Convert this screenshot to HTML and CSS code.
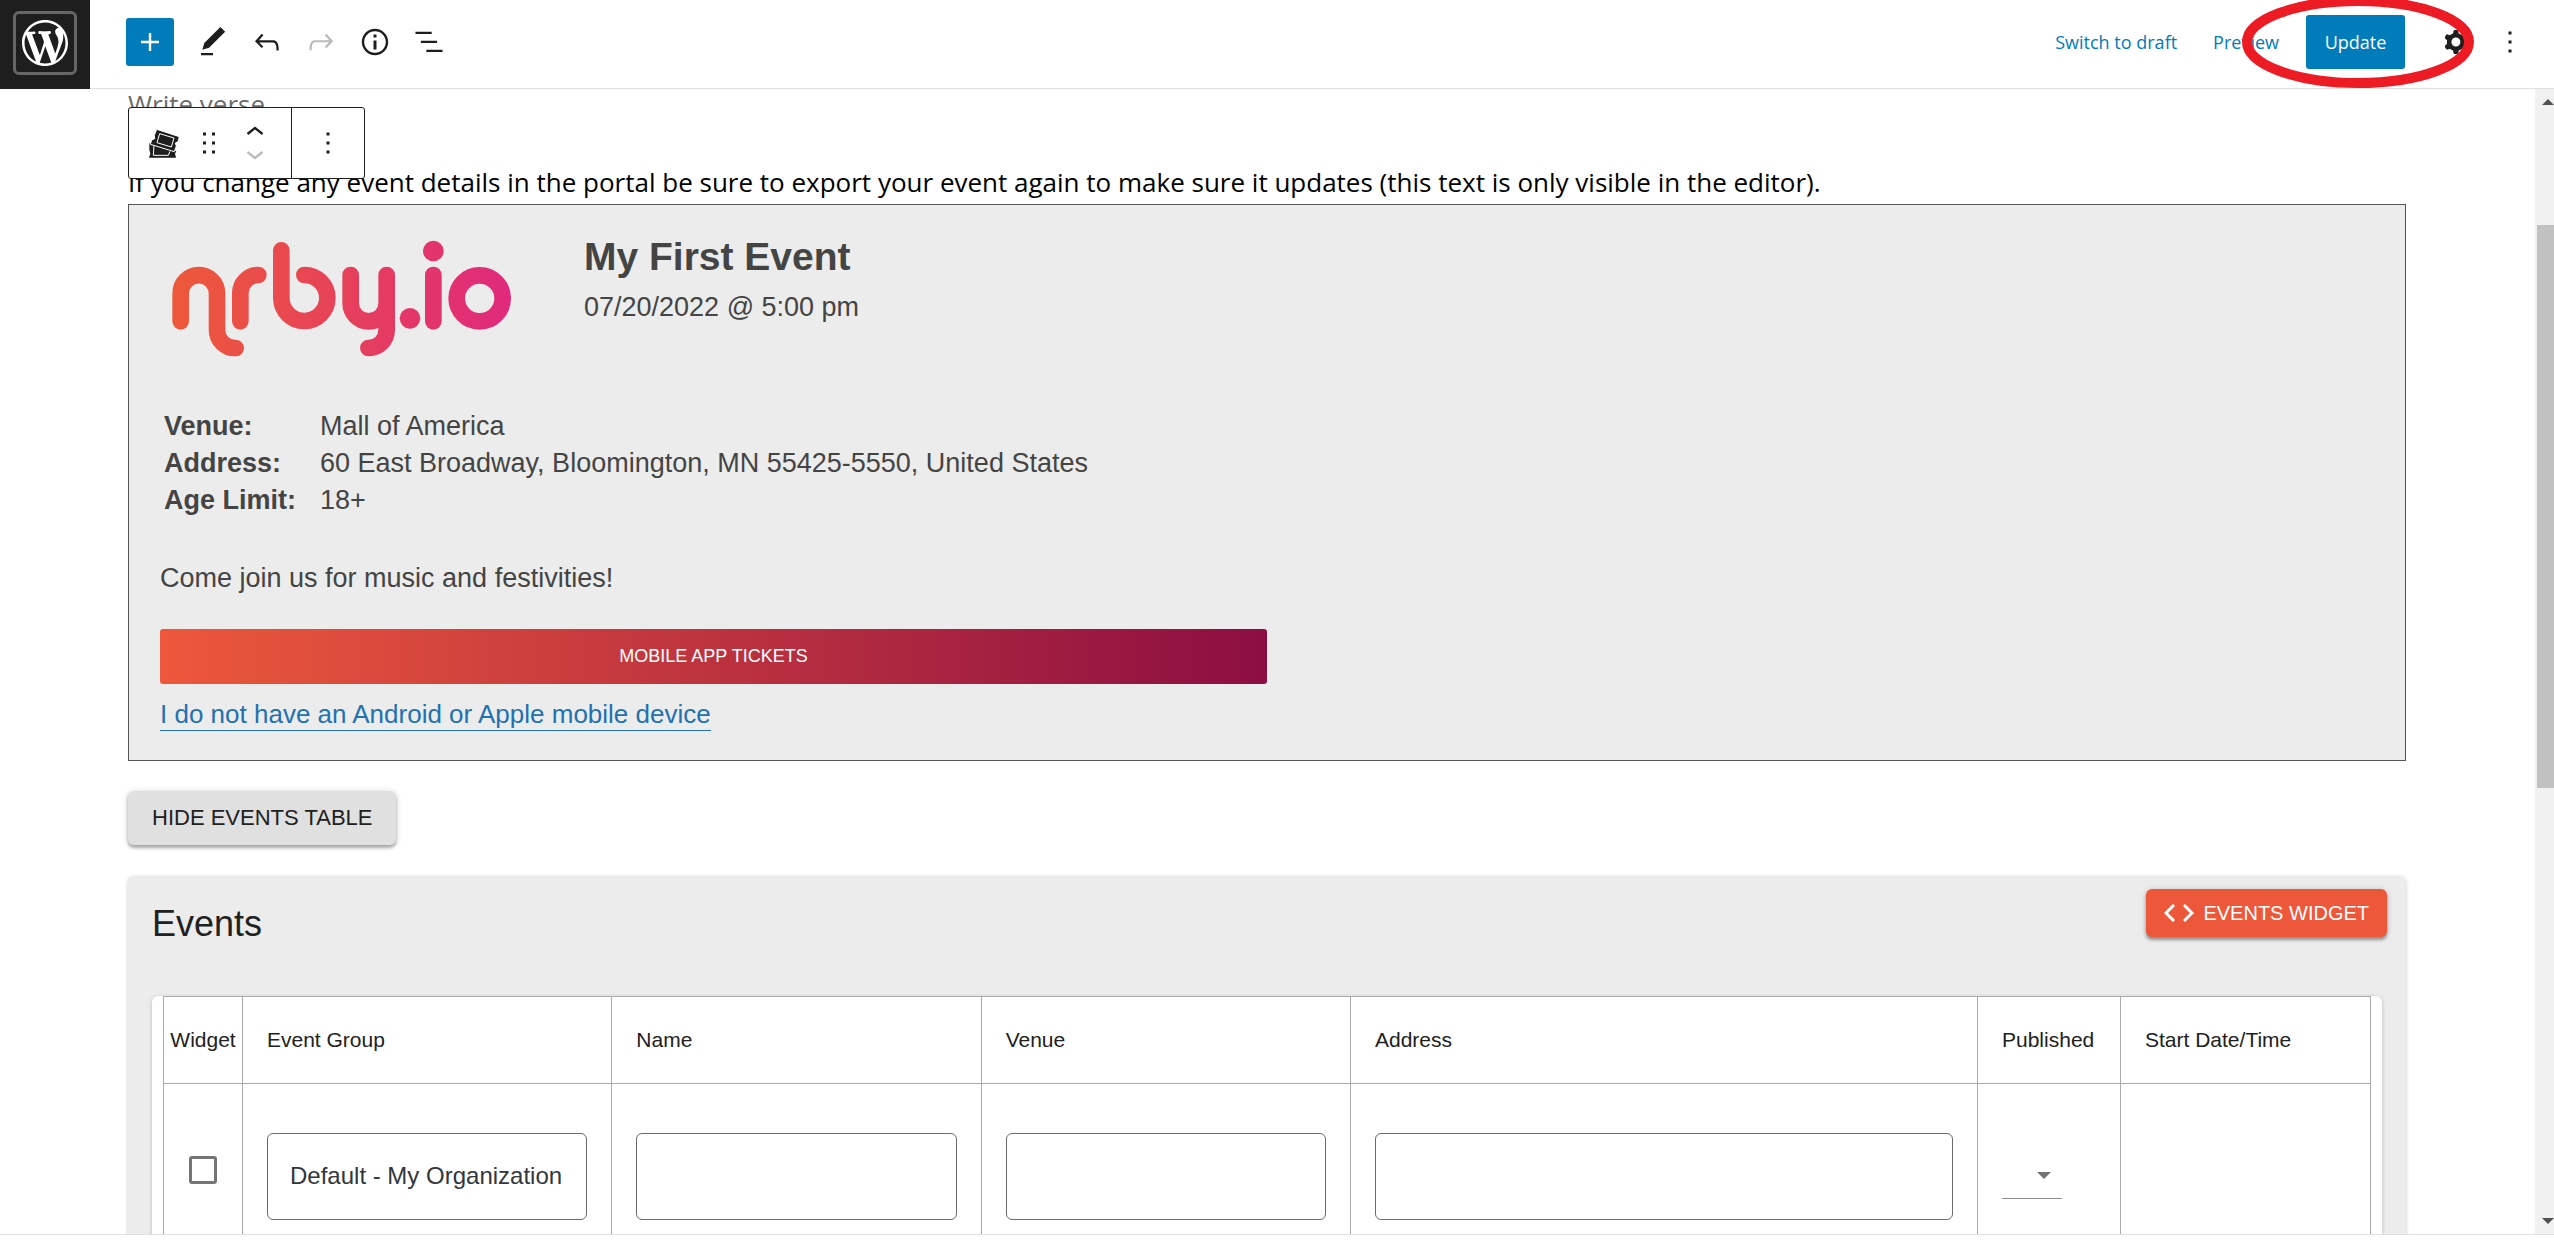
FILE: index.html
```html
<!DOCTYPE html>
<html lang="en">
<head>
<meta charset="utf-8">
<title>Edit Page</title>
<link rel="stylesheet" href="styles.css">
</head>
<body>
<header class="topbar">
  <a class="site-logo" href="#" aria-label="View pages">
    <svg viewBox="0 0 20 20"><path d="M20 10c0-5.51-4.49-10-10-10C4.48 0 0 4.49 0 10c0 5.52 4.48 10 10 10 5.51 0 10-4.48 10-10zM7.78 15.37L4.37 6.22c.55-.02 1.17-.08 1.17-.08.5-.06.44-1.13-.06-1.11 0 0-1.45.11-2.37.11-.18 0-.37 0-.58-.01C4.12 2.69 6.87 1.11 10 1.11c2.33 0 4.45.87 6.05 2.34-.68-.11-1.65.39-1.65 1.58 0 .74.45 1.36.9 2.1.35.61.55 1.36.55 2.46 0 1.49-1.4 5-1.4 5l-3.03-8.37c.54-.02.82-.17.82-.17.5-.05.44-1.25-.06-1.22 0 0-1.44.12-2.38.12-.87 0-2.33-.12-2.33-.12-.5-.03-.56 1.2-.06 1.22l.92.08 1.26 3.41zM17.41 10c.24-.64.74-1.87.43-4.25.7 1.29 1.05 2.71 1.05 4.25 0 3.29-1.73 6.24-4.4 7.78.97-2.59 1.94-5.2 2.92-7.78zM6.1 18.09C3.12 16.65 1.11 13.53 1.11 10c0-1.3.23-2.48.72-3.59C3.25 10.3 4.67 14.2 6.1 18.09zm4.03-6.63l2.58 6.98c-.86.29-1.76.45-2.71.45-.79 0-1.57-.11-2.29-.33.81-2.38 1.62-4.74 2.42-7.1z"/></svg>
  </a>
  <div class="tools">
    <button class="add-btn" aria-label="Add block"><svg class="icon" viewBox="0 0 24 24"><path d="M18 11.2h-5.2V6h-1.6v5.2H6v1.6h5.2V18h1.6v-5.2H18z"/></svg></button>
    <button class="icon-btn" aria-label="Tools"><svg class="icon" viewBox="0 0 24 24"><path d="M20.1 5.1L16.9 2 6.2 12.7l-1.3 4.4 4.5-1.3L20.1 5.1zM4 20.8h8v-1.5H4v1.5z"/></svg></button>
    <button class="icon-btn" aria-label="Undo"><svg class="icon" viewBox="0 0 24 24"><path d="M18.3 11.7c-.6-.6-1.4-.9-2.3-.9H6.7l2.9-3.3-1.1-1-4.5 5L8.5 16l1-1-2.7-2.7H16c.5 0 .9.2 1.3.5 1 1 1 3.4 1 4.5v.3h1.5v-.2c0-1.5 0-4.3-1.5-5.7z"/></svg></button>
    <button class="icon-btn faded" aria-label="Redo"><svg class="icon" viewBox="0 0 24 24"><path d="M15.6 6.5l-1.1 1 2.9 3.3H8c-.9 0-1.7.3-2.3.9-1.4 1.5-1.4 4.2-1.4 5.6v.2h1.5v-.3c0-1.1 0-3.5 1-4.5.3-.3.7-.5 1.3-.5h9.2L14.5 15l1.1 1.1 4.6-4.6-4.6-5z"/></svg></button>
    <button class="icon-btn" aria-label="Details"><svg class="icon" viewBox="0 0 24 24"><path d="M12 3.2c-4.8 0-8.8 3.9-8.8 8.8 0 4.8 3.9 8.8 8.8 8.8 4.8 0 8.8-3.9 8.8-8.8 0-4.8-4-8.8-8.8-8.8zm0 16c-4 0-7.2-3.3-7.2-7.2C4.8 8 8 4.8 12 4.8s7.2 3.3 7.2 7.2c0 4-3.2 7.2-7.2 7.2zM11 17h2v-6h-2v6zm0-8h2V7h-2v2z"/></svg></button>
    <button class="icon-btn" aria-label="List view"><svg class="icon" viewBox="0 0 24 24"><path d="M13.8 5.2H3v1.5h10.8V5.2zm-3.6 12v1.5H21v-1.5H10.2zm7.2-6H6.6v1.5h10.8v-1.5z"/></svg></button>
  </div>
  <div class="actions">
    <button class="text-btn">Switch to draft</button>
    <button class="text-btn">Preview</button>
    <button class="update-btn">Update</button>
    <div class="menu-btns">
      <button class="icon-btn" aria-label="Settings"><svg class="icon" viewBox="0 0 24 24"><path fill-rule="evenodd" d="M10.289 4.836A1 1 0 0111.275 4h1.306a1 1 0 01.987.836l.244 1.466c.787.26 1.503.679 2.108 1.218l1.393-.522a1 1 0 011.216.437l.653 1.13a1 1 0 01-.23 1.273l-1.148.944a6.025 6.025 0 010 2.435l1.149.946a1 1 0 01.23 1.272l-.653 1.13a1 1 0 01-1.216.437l-1.394-.522c-.605.54-1.32.958-2.108 1.218l-.244 1.466a1 1 0 01-.987.836h-1.306a1 1 0 01-.986-.836l-.244-1.466a5.995 5.995 0 01-2.108-1.218l-1.394.522a1 1 0 01-1.217-.436l-.653-1.131a1 1 0 01.23-1.272l1.149-.946a6.026 6.026 0 010-2.435l-1.148-.944a1 1 0 01-.23-1.272l.653-1.131a1 1 0 011.217-.437l1.393.522a5.994 5.994 0 012.108-1.218l.244-1.466zM14.929 12a3 3 0 11-6 0 3 3 0 016 0z"/></svg></button>
      <button class="icon-btn" aria-label="Options"><svg class="icon" viewBox="0 0 24 24"><path d="M13 19h-2v-2h2v2zm0-6h-2v-2h2v2zm0-6h-2V5h2v2z"/></svg></button>
    </div>
    <!-- hand-drawn ring around the Update button -->
    <svg class="ring" viewBox="0 0 232 92"><ellipse cx="116" cy="46" rx="111" ry="41"/></svg>
  </div>
</header>

<div class="workspace">
  <main class="canvas">
    <div class="block-toolbar">
      <div class="toolbar-group toolbar-main">
        <button class="tool-btn" aria-label="Event block">
          <svg class="icon" viewBox="33 30 108 108"><path d="M43 85l6-1 75 24-4 8 3 12H42l4-12-3-12z"/><path d="M57 90l-2 31h45l5-12" fill="none" stroke="#fff" stroke-width="3"/><path d="M65 43l68 22-4 15-8 4 3 9-6 17-72-22 4-13 9-4-1-10z" stroke="#fff" stroke-width="3"/><path d="M74 56l43 13-8 27-43-13z" fill="none" stroke="#fff" stroke-width="3"/></svg>
        </button>
        <button class="tool-btn" aria-label="Drag"><svg class="icon" viewBox="0 0 24 24"><path d="M8 7h2V5H8v2zm0 6h2v-2H8v2zm0 6h2v-2H8v2zm6-14v2h2V5h-2zm0 8h2v-2h-2v2zm0 6h2v-2h-2v2z"/></svg></button>
        <div class="movers">
          <button class="mover-btn" aria-label="Move up"><svg class="mover-icon" viewBox="0 1 24 18"><path d="M6.500 12.400L12 8l5.500 4.400-.9 1.200L12 10l-4.500 3.600-1-1.200z"/></svg></button>
          <button class="mover-btn faded" aria-label="Move down"><svg class="mover-icon" viewBox="0 5 24 18"><path d="M17.500 11.600L12 16l-5.500-4.400.9-1.200L12 14l4.500-3.600 1 1.200z"/></svg></button>
        </div>
      </div>
      <div class="toolbar-group toolbar-more">
        <button class="tool-btn" aria-label="Block options"><svg class="icon" viewBox="0 0 24 24"><path d="M13 19h-2v-2h2v2zm0-6h-2v-2h2v2zm0-6h-2V5h2v2z"/></svg></button>
      </div>
    </div>

    <p class="verse">Write verse…</p>
    <p class="note">If you change any event details in the portal be sure to export your event again to make sure it updates (this text is only visible in the editor).</p>

    <section class="event-card">
      <div class="event-head">
        <svg class="brand" viewBox="30 48 1140 450" role="img" aria-label="nrby.io">
          <defs><linearGradient id="brand-fill" gradientUnits="userSpaceOnUse" x1="66" y1="0" x2="1083" y2="0"><stop offset="0" stop-color="#ed5939"/><stop offset="1" stop-color="#e0297c"/></linearGradient></defs>
          <g fill="none" stroke="url(#brand-fill)" stroke-width="50" stroke-linecap="round">
            <path d="M92 304V220A54 54 0 0 1 201 220V330A54 54 0 0 0 257 384"/>
            <path d="M271 304V219A54 54 0 0 1 325 165"/>
            <path d="M394 91V235A69 69 0 1 0 463 165"/>
            <path d="M602 165V250A54 54 0 0 0 710 250M710 165V330A54 54 0 0 1 655 384"/>
            <path d="M850 165V304"/>
            <circle cx="989" cy="235" r="69"/>
          </g>
          <circle cx="780" cy="295" r="31" fill="url(#brand-fill)"/>
          <circle cx="850" cy="93" r="31" fill="url(#brand-fill)"/>
        </svg>
        <div>
          <h2 class="event-title">My First Event</h2>
          <p class="event-date">07/20/2022 @ 5:00 pm</p>
        </div>
      </div>
      <table class="facts">
        <tr><th scope="row">Venue:</th><td>Mall of America</td></tr>
        <tr><th scope="row">Address:</th><td>60 East Broadway, Bloomington, MN 55425-5550, United States</td></tr>
        <tr><th scope="row">Age Limit:</th><td>18+</td></tr>
      </table>
      <p class="event-text">Come join us for music and festivities!</p>
      <button class="tickets-btn">MOBILE APP TICKETS</button>
      <p class="event-alt"><a href="#">I do not have an Android or Apple mobile device</a></p>
    </section>

    <button class="hide-btn">HIDE EVENTS TABLE</button>

    <section class="events-panel">
      <div class="panel-head">
        <h2 class="panel-title">Events</h2>
        <button class="widget-btn"><svg class="code-icon" viewBox="0 0 30 18"><path d="M10 1L2 9l8 8M20 1l8 8-8 8"/></svg>EVENTS WIDGET</button>
      </div>
      <div class="table-paper">
        <table class="events">
          <colgroup><col class="col-widget"><col><col><col><col class="col-address"><col class="col-published"><col class="col-start"></colgroup>
          <thead>
            <tr><th class="center">Widget</th><th>Event Group</th><th>Name</th><th>Venue</th><th>Address</th><th>Published</th><th>Start Date/Time</th></tr>
          </thead>
          <tbody>
            <tr>
              <td class="center"><input type="checkbox" class="check" aria-label="Widget"></td>
              <td><input class="field" type="text" aria-label="Event Group" value="Default - My Organization"></td>
              <td><input class="field" type="text" aria-label="Name"></td>
              <td><input class="field" type="text" aria-label="Venue"></td>
              <td><input class="field" type="text" aria-label="Address"></td>
              <td><span class="select-wrap"><select class="select" aria-label="Published"><option></option><option>Yes</option><option>No</option></select><svg class="caret" viewBox="0 0 14 7"><path d="M0 0h14L7 7z"/></svg></span></td>
              <td></td>
            </tr>
          </tbody>
        </table>
      </div>
    </section>
  </main>
  <div class="scrollbar" aria-hidden="true">
    <svg class="scroll-arrow" viewBox="0 0 12 6"><path d="M0 6h12L6 0z"/></svg>
    <div class="scroll-thumb"></div>
    <svg class="scroll-arrow" viewBox="0 0 12 6"><path d="M0 0h12L6 6z"/></svg>
  </div>
</div>
<footer class="bottombar"></footer>
</body>
</html>
```
FILE: styles.css
```css
* { box-sizing: border-box; }

:root {
  --ui: "Open Sans", "Noto Sans", sans-serif;
  --body: "Liberation Sans", Arial, sans-serif;
  --ink: #1e1e1e;
  --blue: #007cba;
  --line: #e0e0e0;
}

body {
  margin: 0;
  height: 100vh;
  display: flex;
  flex-direction: column;
  overflow: hidden;
  background: #fff;
  font-family: var(--body);
  color: #212121;
}

h2, p { margin: 0; }

button {
  margin: 0;
  padding: 0;
  border: 0;
  background: none;
  font-family: inherit;
  color: inherit;
}

.icon {
  display: block;
  width: 36px;
  height: 36px;
  fill: currentColor;
}

/* top bar */
.topbar {
  flex: none;
  display: flex;
  height: 89px;
  font-family: var(--ui);
  color: var(--ink);
  border-bottom: 1px solid var(--line);
}

.site-logo {
  display: grid;
  place-items: center;
  width: 90px;
  height: 89px;
  padding-bottom: 3px;
  background: var(--ink);
}

.site-logo svg {
  box-sizing: content-box;
  width: 46px;
  height: 46px;
  padding: 6px;
  border: 3px solid #666;
  border-radius: 6px;
  fill: #fff;
}

.tools {
  display: flex;
  align-items: center;
  height: 84px;
  padding-left: 36px;
}

.add-btn {
  padding: 6px;
  margin-right: 12px;
  border-radius: 3px;
  background: var(--blue);
  color: #fff;
}

.icon-btn { padding: 9px; }

.faded { color: #bbb; }

.actions {
  position: relative;
  display: flex;
  align-items: center;
  height: 84px;
  margin-left: auto;
  padding-right: 17px;
  font-size: 18px;
}

.text-btn {
  font-size: 18px;
  color: var(--blue);
  margin-right: 36px;
}

.update-btn {
  width: 99px;
  height: 54px;
  margin-left: -9px;
  border-radius: 3px;
  background: var(--blue);
  color: #fff;
  font-size: 18px;
}

.menu-btns {
  display: flex;
  margin-left: 24px;
}

.ring {
  position: absolute;
  top: -4px;
  right: 80px;
  width: 232px;
  height: 92px;
  fill: none;
  stroke: #ed1c24;
  stroke-width: 10;
  pointer-events: none;
}

/* canvas */
.workspace {
  flex: 1;
  min-height: 0;
  display: flex;
  overflow: hidden;
}

.canvas {
  position: relative;
  flex: 1;
  min-width: 0;
  padding: 0 129px 0 128px;
  overflow: hidden;
}

.verse,
.note {
  font-family: var(--ui);
  font-size: 26px;
  line-height: 36px;
}

.verse {
  margin-top: -3px;
  color: #6c6c6c;
}

.note {
  margin-top: 42px;
  color: #000;
  white-space: nowrap;
}

.block-toolbar {
  position: absolute;
  top: 18px;
  left: 128px;
  display: flex;
  height: 72px;
  border: 1px solid var(--ink);
  border-radius: 3px;
  background: #fff;
  color: var(--ink);
}

.toolbar-group {
  display: flex;
  align-items: center;
}

.toolbar-main {
  width: 162px;
  padding-left: 17px;
}

.toolbar-main > .tool-btn + .tool-btn { margin-left: 9px; }

.toolbar-more {
  width: 73px;
  justify-content: center;
  border-left: 1px solid var(--ink);
}

.movers { margin-left: 10px; }

.mover-btn { display: block; }

.mover-icon {
  display: block;
  width: 36px;
  height: 27px;
  fill: currentColor;
}

/* event card */
.event-card {
  margin-top: 4px;
  padding: 31px 31px 27px;
  border: 1px solid #555;
  background: #ececec;
  color: #444;
  font-size: 27px;
  line-height: 37px;
}

.event-head {
  display: flex;
  gap: 44px;
}

.brand {
  width: 380px;
  height: 150px;
}

.event-title {
  font-size: 39px;
  line-height: 42px;
}

.event-date { margin-top: 11px; }

.facts {
  margin-top: 22px;
  border-collapse: collapse;
}

.facts th {
  width: 160px;
  padding: 0 0 0 4px;
  text-align: left;
}

.facts td { padding: 0; }

.event-text { margin-top: 41px; }

.tickets-btn {
  display: block;
  width: 50%;
  height: 55px;
  margin-top: 32px;
  border-radius: 3px;
  background: linear-gradient(90deg, #ed583b, #8c0e42);
  color: #fff;
  font-size: 18px;
}

.event-alt { margin-top: 12px; }

.event-alt a {
  display: inline-block;
  line-height: 32px;
  border-bottom: 1px solid #2271b1;
  color: #2271b1;
  font-size: 26px;
  text-decoration: none;
}

.hide-btn {
  display: block;
  height: 54px;
  margin-top: 30px;
  padding: 0 24px;
  border-radius: 6px;
  background: #e0e0e0;
  box-shadow: 0 3px 3px rgba(0, 0, 0, .25), 0 1px 6px rgba(0, 0, 0, .2);
  font-size: 22px;
}

/* events table */
.events-panel {
  margin-top: 31px;
  padding: 13px 24px 24px;
  border-radius: 6px;
  background: #ececec;
  box-shadow: 0 1px 4px rgba(0, 0, 0, .2);
}

.panel-head {
  display: flex;
  justify-content: space-between;
  align-items: flex-start;
  height: 107px;
}

.panel-title {
  padding-top: 15px;
  font-size: 36px;
  font-weight: 400;
  line-height: 40px;
}

.widget-btn {
  display: flex;
  align-items: center;
  gap: 9px;
  height: 48px;
  margin-right: -5px;
  padding: 0 18px;
  border-radius: 6px;
  background: #ed583b;
  box-shadow: 0 3px 3px rgba(0, 0, 0, .3), 0 1px 6px rgba(0, 0, 0, .2);
  color: #fff;
  font-size: 20px;
}

.code-icon {
  width: 30px;
  height: 18px;
  fill: none;
  stroke: #fff;
  stroke-width: 3;
}

.table-paper {
  padding: 0 11px 12px;
  border-radius: 6px;
  background: #fff;
  box-shadow: 0 1px 4px rgba(0, 0, 0, .2);
}

.events {
  width: 100%;
  table-layout: fixed;
  border-collapse: collapse;
}

.col-widget { width: 79px; }
.col-address { width: 627px; }
.col-published { width: 143px; }
.col-start { width: 250px; }

.events th,
.events td {
  padding: 0 24px;
  border: 1px solid #ababab;
  text-align: left;
}

.events th {
  height: 87px;
  font-size: 21px;
  font-weight: 400;
}

.events td { height: 185px; }

.events .center {
  padding: 0;
  text-align: center;
}

.events td.center { padding-bottom: 8px; }

.field {
  display: block;
  width: 100%;
  height: 87px;
  padding: 0 22px;
  border: 1px solid #6b6b6b;
  border-radius: 6px;
  background: #fff;
  color: #32373c;
  font-family: inherit;
  font-size: 24px;
}

.check {
  appearance: none;
  display: inline-block;
  width: 28px;
  height: 28px;
  margin: 0;
  border: 3px solid #757575;
  border-radius: 3px;
}

.select-wrap {
  display: flex;
  align-items: center;
  justify-content: flex-end;
  width: 60px;
  height: 46px;
  padding-right: 11px;
  border-bottom: 1px solid #8c8c8c;
  position: relative;
}

.select {
  appearance: none;
  position: absolute;
  inset: 0;
  border: 0;
  background: none;
}

.caret {
  width: 14px;
  height: 7px;
  fill: #757575;
}

/* scrollbar */
.scrollbar {
  flex: none;
  display: flex;
  flex-direction: column;
  width: 19px;
  padding: 10px 0 10px 2px;
  background: #f1f1f1;
}

.scroll-arrow {
  flex: none;
  width: 12px;
  height: 6px;
  margin-left: 5px;
  fill: #505050;
}

.scroll-thumb {
  height: 50%;
  margin: 120px 0 auto;
  background: #c1c1c1;
}

.bottombar {
  flex: none;
  height: 10px;
  border-top: 1px solid var(--line);
}
```
